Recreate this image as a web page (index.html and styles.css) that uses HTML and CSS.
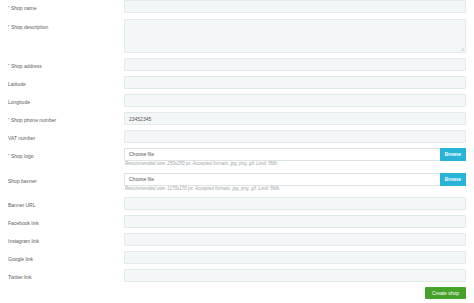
FILE: index.html
```html
<!DOCTYPE html>
<html lang="en">
<head>
    <meta charset="UTF-8">
    <title>Create shop</title>
    <link rel="stylesheet" href="styles.css">
</head>
<body>
<form id="shopForm">
    <div class="row">
        <label><span class="req">*</span> Shop name</label>
        <input type="text">
    </div>
    <div class="row row-area">
        <label><span class="req">*</span> Shop description</label>
        <div class="area"><textarea></textarea></div>
    </div>
    <div class="row">
        <label><span class="req">*</span> Shop address</label>
        <input type="text">
    </div>
    <div class="row">
        <label>Latitude</label>
        <input type="text">
    </div>
    <div class="row">
        <label>Longitude</label>
        <input type="text">
    </div>
    <div class="row">
        <label><span class="req">*</span> Shop phone number</label>
        <input type="text" value="23452345">
    </div>
    <div class="row">
        <label>VAT number</label>
        <input type="text">
    </div>
    <div class="row row-file">
        <label><span class="req">*</span> Shop logo</label>
        <div>
            <div class="file">
                <span class="file-name">Choose file</span>
                <span class="browse">Browse</span>
            </div>
            <div class="help">Recommended size: 250x250 px. Accepted formats: jpg, png, gif. Limit: 5Mb.</div>
        </div>
    </div>
    <div class="row row-file">
        <label>Shop banner</label>
        <div>
            <div class="file">
                <span class="file-name">Choose file</span>
                <span class="browse">Browse</span>
            </div>
            <div class="help">Recommended size: 1170x170 px. Accepted formats: jpg, png, gif. Limit: 5Mb.</div>
        </div>
    </div>
    <div class="row">
        <label>Banner URL</label>
        <input type="text">
    </div>
    <div class="row">
        <label>Facebook link</label>
        <input type="text">
    </div>
    <div class="row">
        <label>Instagram link</label>
        <input type="text">
    </div>
    <div class="row">
        <label>Google link</label>
        <input type="text">
    </div>
    <div class="row">
        <label>Twitter link</label>
        <input type="text">
    </div>
    <div class="actions">
        <button type="button" id="create">Create shop</button>
    </div>
</form>
</body>
</html>
```

FILE: styles.css
```css
body {
    margin: 0;
    background: #fff;
    font-family: "Liberation Sans", Arial, sans-serif;
    color: #555;
}

#shopForm {
    padding: 0 8px 0 8px;
}

.row {
    display: grid;
    grid-template-columns: 116px 1fr;
    margin-bottom: 5px;
}

.row-area {
    margin-top: 6px;
}

label {
    font-size: 5px;
    line-height: 6px;
    padding-top: 5px;
    color: #5c5c5c;
}

.req {
    font-size: 4px;
    vertical-align: top;
}

input,
textarea {
    box-sizing: border-box;
    width: 100%;
    height: 13px;
    margin: 0;
    padding: 0 4px;
    border: 1px solid #e4e9eb;
    border-radius: 1px;
    background: #f4f7f8;
    font-family: inherit;
    font-size: 5px;
    color: #555;
    outline: none;
}

.area {
    position: relative;
}

textarea {
    display: block;
    height: 34px;
    resize: none;
}

.area::after {
    content: "";
    position: absolute;
    right: 2px;
    bottom: 2px;
    width: 3px;
    height: 3px;
    background: linear-gradient(135deg, transparent 45%, #c9cfd2 45%, #c9cfd2 60%, transparent 60%, transparent 75%, #c9cfd2 75%);
}

.file {
    display: flex;
    box-sizing: border-box;
    height: 13px;
    border: 1px solid #dde2e4;
    border-right: none;
    background: #fff;
    font-size: 5px;
}

.file-name {
    flex: 1;
    padding-left: 4px;
    line-height: 11px;
    color: #555;
}

.browse {
    width: 26px;
    margin: -1px 0;
    background: #27b4d6;
    color: #fff;
    font-weight: bold;
    font-size: 4.5px;
    line-height: 13px;
    text-align: center;
}

.help {
    height: 6.5px;
    padding-left: 1px;
    font-size: 4.5px;
    line-height: 6.5px;
    font-style: italic;
    color: #a0a4a6;
    white-space: nowrap;
}

.actions {
    display: flex;
    justify-content: flex-end;
}

#create {
    width: 41px;
    height: 12px;
    padding: 0;
    border: none;
    border-radius: 1px;
    background: #46a12b;
    color: #fff;
    font-family: inherit;
    font-size: 5px;
    cursor: pointer;
}
```
